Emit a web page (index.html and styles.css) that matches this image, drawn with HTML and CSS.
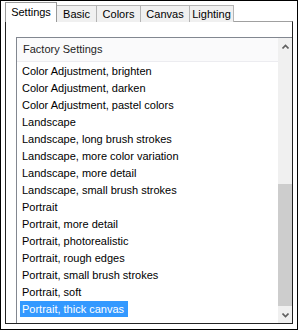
FILE: index.html
```html
<!DOCTYPE html>
<html lang="en">
<head>
<meta charset="UTF-8">
<title>Settings</title>
<link rel="stylesheet" href="styles.css">
</head>
<body>
<div class="frame">
  <div class="tabs">
    <div class="tab selected">Settings</div>
    <div class="tab t-basic">Basic</div>
    <div class="tab t-colors">Colors</div>
    <div class="tab t-canvas">Canvas</div>
    <div class="tab t-lighting">Lighting</div>
  </div>
  <div class="panel">
    <div class="listbox">
      <div class="list">
        <div class="group">Factory Settings</div>
        <div class="row"><span>Color Adjustment, brighten</span></div>
        <div class="row"><span>Color Adjustment, darken</span></div>
        <div class="row"><span>Color Adjustment, pastel colors</span></div>
        <div class="row"><span>Landscape</span></div>
        <div class="row"><span>Landscape, long brush strokes</span></div>
        <div class="row"><span>Landscape, more color variation</span></div>
        <div class="row"><span>Landscape, more detail</span></div>
        <div class="row"><span>Landscape, small brush strokes</span></div>
        <div class="row"><span>Portrait</span></div>
        <div class="row"><span>Portrait, more detail</span></div>
        <div class="row"><span>Portrait, photorealistic</span></div>
        <div class="row"><span>Portrait, rough edges</span></div>
        <div class="row"><span>Portrait, small brush strokes</span></div>
        <div class="row"><span>Portrait, soft</span></div>
        <div class="row active"><span>Portrait, thick canvas</span></div>
      </div>
      <!-- vertical scrollbar -->
      <div class="scrollbar">
        <div class="sb-btn sb-up">
          <svg width="7" height="5" viewBox="0 0 7 5"><path d="M0.5 4.5 L3.5 1.5 L6.5 4.5" fill="none" stroke="#606060" stroke-width="1.6"/></svg>
        </div>
        <div class="sb-track"><div class="sb-thumb"></div></div>
        <div class="sb-btn sb-down">
          <svg width="7" height="5" viewBox="0 0 7 5"><path d="M0.5 0.5 L3.5 3.5 L6.5 0.5" fill="none" stroke="#606060" stroke-width="1.6"/></svg>
        </div>
      </div>
    </div>
  </div>
</div>
</body>
</html>
```

FILE: styles.css
```css
body { margin: 0; background: #fff; font-family: "Liberation Sans", Arial, sans-serif; font-size: 11px; color: #000; }

.frame {
  width: 298px;
  height: 330px;
  box-sizing: border-box;
  border: 1px solid #000;
  padding: 2px 4px 5px 4px;
  display: flex;
  flex-direction: column;
  background: #fff;
}

/* Tab strip */
.tabs { display: flex; align-items: flex-end; height: 19px; margin-bottom: -1px; position: relative; z-index: 1; }
.tab {
  box-sizing: border-box;
  height: 17px;
  line-height: 17px;
  border: 1px solid #b4b4b4;
  border-bottom: none;
  background: #f0f0f0;
  text-align: center;
  margin-left: -1px;
}
.tab.selected { height: 20px; line-height: 18px; width: 52px; margin-left: 0; background: #fff; border-color: #9a9a9a; position: relative; z-index: 2; }
.t-basic { width: 41px; }
.t-colors { width: 45px; }
.t-canvas { width: 50px; }
.t-lighting { width: 45px; }

/* Tab page */
.panel {
  flex: 1;
  border: 1px solid #222;
  border-top-color: #a0a0a0;
  padding: 15px 0 0 10px;
  display: flex;
  overflow: hidden;
  background: #fff;
}

.listbox { flex: 1; display: flex; border-left: 1px solid #828790; border-top: 1px solid #828790; }
.list { flex: 1; }

.group {
  height: 23px;
  line-height: 23px;
  padding-left: 6px;
  background: #fafafb;
  border-bottom: 1px solid #ececf0;
  color: #1e1e1e;
}

.row { height: 17px; padding-left: 3px; padding-top: 1px; box-sizing: border-box; }
.row span { display: inline-block; line-height: 16px; padding: 0 4px 0 2px; }
.row.active span { background: #3399ff; color: #fff; }

/* Scrollbar */
.scrollbar { width: 14px; display: flex; flex-direction: column; background: #f0f0f0; }
.sb-btn { display: flex; align-items: center; justify-content: center; }
.sb-up { height: 17px; }
.sb-down { height: 15px; }
.sb-track { flex: 1; padding-top: 129px; }
.sb-thumb { height: 122px; background: #cdcdcd; }
```
